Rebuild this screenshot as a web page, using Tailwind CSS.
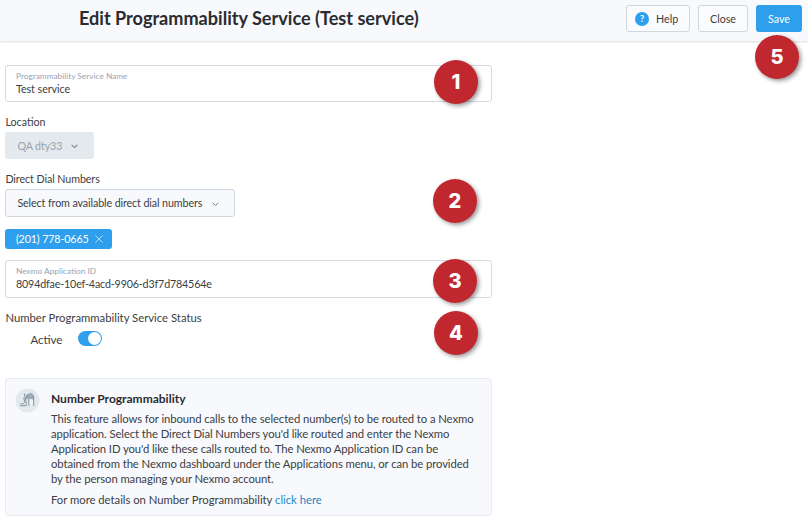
<!DOCTYPE html>
<html lang="en">
<head>
<meta charset="utf-8">
<title>Edit Programmability Service</title>
<script src="https://cdn.jsdelivr.net/npm/@tailwindcss/browser@4"></script>
</head>
<body class="relative h-[528px] w-[808px] overflow-hidden bg-white font-['Lato',sans-serif] text-[10.7px] leading-[15px] text-[#3b3e42] whitespace-nowrap">
<header class="flex h-[41px] items-start bg-[#f8f9fd] pl-[79px] pr-[6px] pt-[5px] shadow-[0_1px_2px_rgba(0,0,0,0.14)]">
  <h1 class="mr-auto text-[18.1px] font-bold leading-[27px] text-[#2a2c30]">Edit Programmability Service (Test service)</h1>
  <div class="flex gap-2">
    <button class="flex h-[27px] w-[64px] items-center gap-[7px] rounded-[3px] border border-[#cfd8df] bg-[#fafbfe] pl-[8px]">
      <span class="flex size-[14px] items-center justify-center rounded-full bg-[#2d9fec] text-[9px] font-bold leading-none text-white">?</span>Help</button>
    <button class="h-[27px] w-[50px] rounded-[3px] border border-[#cfd8df] bg-[#fafbfe]">Close</button>
    <button class="h-[27px] w-[46px] rounded-[3px] bg-[#2d9fec] text-white">Save</button>
  </div>
</header>

<main class="flex w-[492.4px] flex-col items-start pl-[5.4px] pt-[24px]">
  <div class="h-[37px] w-full rounded-[3px] border border-[#d3dce2] pl-[9.600px] pt-[4px]">
    <div class="text-[8.3px] leading-[12px] text-[#98a3b3]">Programmability Service Name</div>
    <div class="leading-[14px] tracking-[-0.05px]">Test service</div>
  </div>

  <label class="mt-[12px]">Location</label>
  <button class="mt-[3px] flex h-[27px] w-[89px] items-center gap-[10px] rounded-[3px] bg-[#e3e9ec] pl-[12px] text-[#98a3b3]"><span class="w-[44px] text-left tracking-[-0.1px]">QA dty33</span>
    <svg class="mt-px h-[5px] w-[7px]" viewBox="0 0 7 5" fill="none" stroke="#8b95a3" stroke-width="1.2" stroke-linecap="round" stroke-linejoin="round"><path d="M1 1.2 3.5 3.5 6 1.2"/></svg>
  </button>

  <label class="mt-[12px] tracking-[-0.07px]">Direct Dial Numbers</label>
  <button class="mt-[3px] flex h-[28px] w-[230px] items-center rounded-[3px] border border-[#cfd8df] bg-[#f8f9fd] pb-px pl-[11px]"><span class="w-[195px] text-left tracking-[-0.1px]">Select from available direct dial numbers</span>
    <svg class="mt-[3px] h-[5px] w-[7px]" viewBox="0 0 7 5" fill="none" stroke="#777c84" stroke-width="1" stroke-linecap="round" stroke-linejoin="round"><path d="M1 1.2 3.5 3.5 6 1.2"/></svg>
  </button>

  <div class="mt-[12px] flex h-[19.5px] w-[107px] items-center rounded-[3px] bg-[#2d9fec] pb-px pl-[10.5px] text-white"><span class="w-[79px] tracking-[-0.12px]">(201) 778-0665</span>
    <svg class="mt-px size-[8px]" viewBox="0 0 8 8" fill="none" stroke="#c4e4fa" stroke-width="0.9" stroke-linecap="round"><path d="M.7.7l6.600 6.600M7.300.7.7 7.300"/></svg>
  </div>

  <div class="mt-[11.5px] h-[38px] w-full rounded-[3px] border border-[#d3dce2] pl-[9.600px] pt-[4px]">
    <div class="text-[8.3px] leading-[12px] text-[#98a3b3]">Nexmo Application ID</div>
    <div class="leading-[13px] tracking-[-0.15px]">8094dfae-10ef-4acd-9906-d3f7d784564e</div>
  </div>

  <label class="mt-[12px] text-[11.3px]">Number Programmability Service Status</label>
  <div class="mt-[4px] flex h-[19px] items-center pl-[25px] text-[11.5px]">
    <span class="mt-[2px] w-[32px]">Active</span>
    <span class="ml-[15.5px] flex h-[15px] w-[24px] justify-end rounded-full bg-[#2d9fec] p-px"><span class="size-[13px] rounded-full bg-white"></span></span>
  </div>

  <section class="mt-[30px] flex h-[138px] w-full gap-[11px] rounded-[4px] border border-[#e6ecf1] bg-[#f8f9fd] pl-[8.600px] pt-[9px] text-[11.3px]">
    <svg class="size-[25px] shrink-0" viewBox="0 0 25 25" fill="none"><circle cx="12.500" cy="12.500" r="12" fill="#e3e9ec"/><path d="M11.200 10.500 12 6.500 14 5.500 15.500 4.800 17.500 5.500 19 8V11.500H13z" fill="#9baab5"/><path d="M14.200 17.500v-5c0-1 .7-1.500 1.700-1.500s2 .5 2 1.500v5" fill="#f0f3f5"/><path d="M5.500 17.700h5.700v-3.200L10.500 11 9.300 5.800M5.800 16c2.300.1 3.700-.6 3.900-2.300L8.800 10M10.700 10.800l1.500-4.300M18.700 17.500V8.500M13.800 17.500v-5.700" stroke="#8293a0" stroke-width="1" stroke-linecap="round"/></svg>
    <div class="pt-[3px]">
      <h2 class="text-[12px] font-bold text-[#2a2c30]">Number Programmability</h2>
      <p class="mt-[5px] tracking-[-0.09px]">This feature allows for inbound calls to the selected number(s) to be routed to a Nexmo<br>application. Select the Direct Dial Numbers you'd like routed and enter the Nexmo<br>Application ID you'd like these calls routed to. The Nexmo Application ID can be<br>obtained from the Nexmo dashboard under the Applications menu, or can be provided<br>by the person managing your Nexmo account.</p>
      <p class="mt-[6px] tracking-[-0.02px]">For more details on Number Programmability <a class="text-[#2585c7]">click here</a></p>
    </div>
  </section>
</main>

<div class="absolute left-[434px] top-[60px] flex size-[44px] items-center justify-center rounded-full bg-[#c1272f] font-['Inter'] text-[20px] font-extrabold text-white shadow-[2px_2px_4px_rgba(0,0,0,0.4)]">1</div>
<div class="absolute left-[433px] top-[179px] flex size-[44px] items-center justify-center rounded-full bg-[#c1272f] font-['Inter'] text-[20px] font-extrabold text-white shadow-[2px_2px_4px_rgba(0,0,0,0.4)]">2</div>
<div class="absolute left-[433px] top-[259px] flex size-[44px] items-center justify-center rounded-full bg-[#c1272f] font-['Inter'] text-[20px] font-extrabold text-white shadow-[2px_2px_4px_rgba(0,0,0,0.4)]">3</div>
<div class="absolute left-[434px] top-[311px] flex size-[44px] items-center justify-center rounded-full bg-[#c1272f] font-['Inter'] text-[20px] font-extrabold text-white shadow-[2px_2px_4px_rgba(0,0,0,0.4)]">4</div>
<div class="absolute left-[755px] top-[35px] flex size-[44px] items-center justify-center rounded-full bg-[#c1272f] font-['Inter'] text-[20px] font-extrabold text-white shadow-[2px_2px_4px_rgba(0,0,0,0.4)]">5</div>
</body>
</html>
